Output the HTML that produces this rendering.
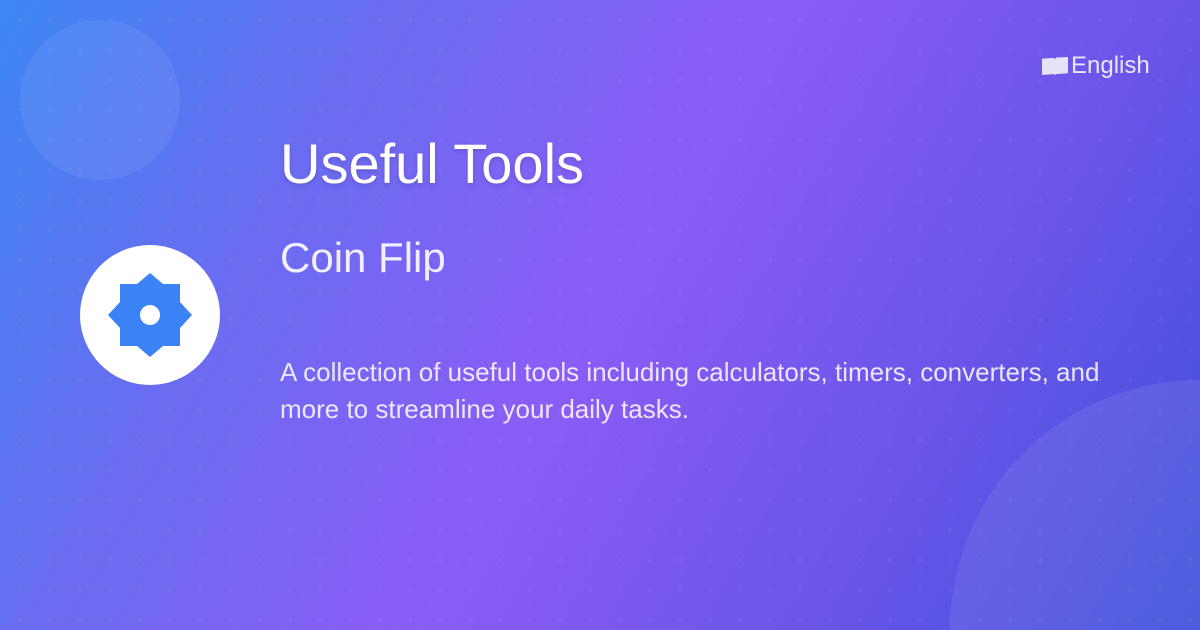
<!DOCTYPE html>
<html><head><style>
html,body{margin:0;padding:0;width:1200px;height:630px;overflow:hidden}
body{font-family:"Liberation Sans",sans-serif}
.wrap{position:relative;width:1200px;height:630px;overflow:hidden;
background:linear-gradient(120deg,#3d86f4 0%,#6a6cf1 25%,#8b5cf6 50%,#6a55e8 75%,#3d50dc 100%);}
.dots{position:absolute;inset:0;background-image:radial-gradient(rgba(255,255,255,0.05) 1.5px,transparent 2px);background-size:30px 30px;background-position:5px 5px}
.c1{position:absolute;left:20px;top:20px;width:160px;height:160px;border-radius:50%;background:rgba(255,255,255,0.07)}
.c2{position:absolute;left:950px;top:380px;width:500px;height:500px;border-radius:50%;background:rgba(255,255,255,0.08)}
.logo{position:absolute;left:80px;top:245px;width:140px;height:140px;border-radius:50%;background:#fff}
h1{position:absolute;left:280px;top:131px;margin:0;font-size:56px;font-weight:400;color:#fff;text-shadow:0 2px 4px rgba(0,0,0,.15);white-space:nowrap}
h2{position:absolute;left:280px;top:234px;margin:0;font-size:42px;font-weight:400;color:rgba(255,255,255,.9);white-space:nowrap}
p{position:absolute;left:280px;top:354px;margin:0;width:840px;font-size:26px;line-height:37px;color:rgba(255,255,255,.85)}
.lang{position:absolute;left:1042px;top:52px;font-size:24px;color:rgba(255,255,255,.85);display:flex;align-items:center}
.book{width:26px;height:18px;background:#e5e3f5;margin-right:3px;clip-path:polygon(0 10%,45% 5%,50% 12%,55% 3%,100% 0,100% 90%,55% 95%,50% 100%,45% 95%,0 100%)}
</style></head><body>
<div class="wrap">
<div class="dots"></div>
<div class="c1"></div><div class="c2"></div>
<div class="logo">
<svg width="140" height="140" viewBox="80 245 140 140">
<path fill="#3b82f6" fill-rule="evenodd" d="M150 273 L163 284 L180 284 L180 302 L192 315 L180 328 L180 346 L163 346 L150 357 L137 346 L120 346 L120 328 L108 315 L120 302 L120 284 L137 284 Z M150 305 A10 10 0 1 0 150.01 305 Z"/>
</svg></div>
<div class="lang"><div class="book"></div>English</div>
<h1>Useful Tools</h1>
<h2>Coin Flip</h2>
<p>A collection of useful tools including calculators, timers, converters, and more to streamline your daily tasks.</p>
</div>
</body></html>
